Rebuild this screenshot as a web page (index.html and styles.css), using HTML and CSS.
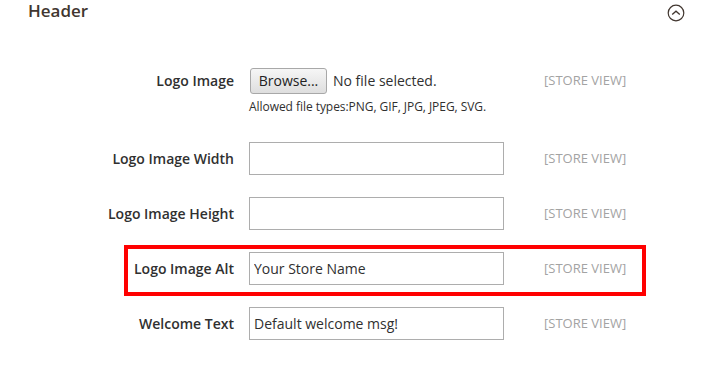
FILE: index.html
```html
<!DOCTYPE html>
<html>
<head>
    <title>Header Settings</title>
    <link rel="stylesheet" href="styles.css">
</head>
<body>
    <div class="section-head">
        <h2>Header</h2>
        <span class="toggle">
            <svg width="18" height="18" viewBox="0 0 18 18">
                <circle cx="9" cy="9" r="7.8" fill="none" stroke="#41362f" stroke-width="1.2"/>
                <path d="M5.2 10.6 L9 7.2 L12.8 10.6" fill="none" stroke="#41362f" stroke-width="1.3"/>
            </svg>
        </span>
    </div>

    <div class="fields">
        <div class="row file-row">
            <label>Logo Image</label>
            <div class="control">
                <div class="file-line">
                    <button class="browse">Browse...</button>
                    <span class="file-name">No file selected.</span>
                </div>
                <div class="note">Allowed file types:PNG, GIF, JPG, JPEG, SVG.</div>
            </div>
            <span class="scope">[STORE VIEW]</span>
        </div>
        <div class="row">
            <label>Logo Image Width</label>
            <div class="control"><input type="text" value=""></div>
            <span class="scope">[STORE VIEW]</span>
        </div>
        <div class="row">
            <label>Logo Image Height</label>
            <div class="control"><input type="text" value=""></div>
            <span class="scope">[STORE VIEW]</span>
        </div>
        <div class="row highlight">
            <label>Logo Image Alt</label>
            <div class="control"><input type="text" value="Your Store Name"></div>
            <span class="scope">[STORE VIEW]</span>
        </div>
        <div class="row">
            <label>Welcome Text</label>
            <div class="control"><input type="text" value="Default welcome msg!"></div>
            <span class="scope">[STORE VIEW]</span>
        </div>
    </div>
</body>
</html>
```

FILE: styles.css
```css
body {
    font-family: "Open Sans", Arial, sans-serif;
    color: #303030;
    margin: 0;
    background: #fff;
}
.section-head {
    display: flex;
    justify-content: space-between;
    align-items: flex-start;
    padding: 1px 22px 0 28px;
    height: 62px;
}
.section-head h2 {
    margin: 0;
    font-size: 17px;
    font-weight: 600;
    line-height: 20px;
    color: #41362f;
}
.toggle {
    margin-top: 3px;
    height: 18px;
}
.fields {
    display: flex;
    flex-direction: column;
    gap: 22px;
}
.row {
    display: grid;
    grid-template-columns: 249px 255px 1fr;
    position: relative;
}
.file-row {
    padding-top: 1px;
}
.row label {
    text-align: right;
    padding-right: 15px;
    font-size: 14px;
    font-weight: 600;
    line-height: 33px;
}
.row input {
    box-sizing: border-box;
    width: 255px;
    height: 33px;
    border: 1px solid #adadad;
    padding: 0 4px;
    font-family: "Open Sans", Arial, sans-serif;
    font-size: 14px;
    color: #303030;
    margin: 0;
    outline: none;
}
.scope {
    padding-left: 40px;
    font-size: 13px;
    line-height: 33px;
    color: #a3a3a3;
}
.file-line {
    display: flex;
    align-items: center;
    height: 33px;
}
.browse {
    box-sizing: border-box;
    height: 26px;
    width: 77px;
    margin: 0 6px 0 1px;
    padding: 0;
    font-family: "Open Sans", Arial, sans-serif;
    font-size: 14px;
    color: #222;
    border: 1px solid #a8a8a8;
    border-radius: 3px;
    background: linear-gradient(#f6f6f6, #dedede);
}
.file-name {
    font-size: 14px;
}
.note {
    font-size: 12px;
    line-height: 16px;
    margin-top: 2px;
    padding-bottom: 5px;
    letter-spacing: -0.05px;
}
.highlight::after {
    content: "";
    position: absolute;
    left: 124px;
    top: -7px;
    width: 514px;
    height: 43px;
    border: 4px solid #ff0000;
}
```
